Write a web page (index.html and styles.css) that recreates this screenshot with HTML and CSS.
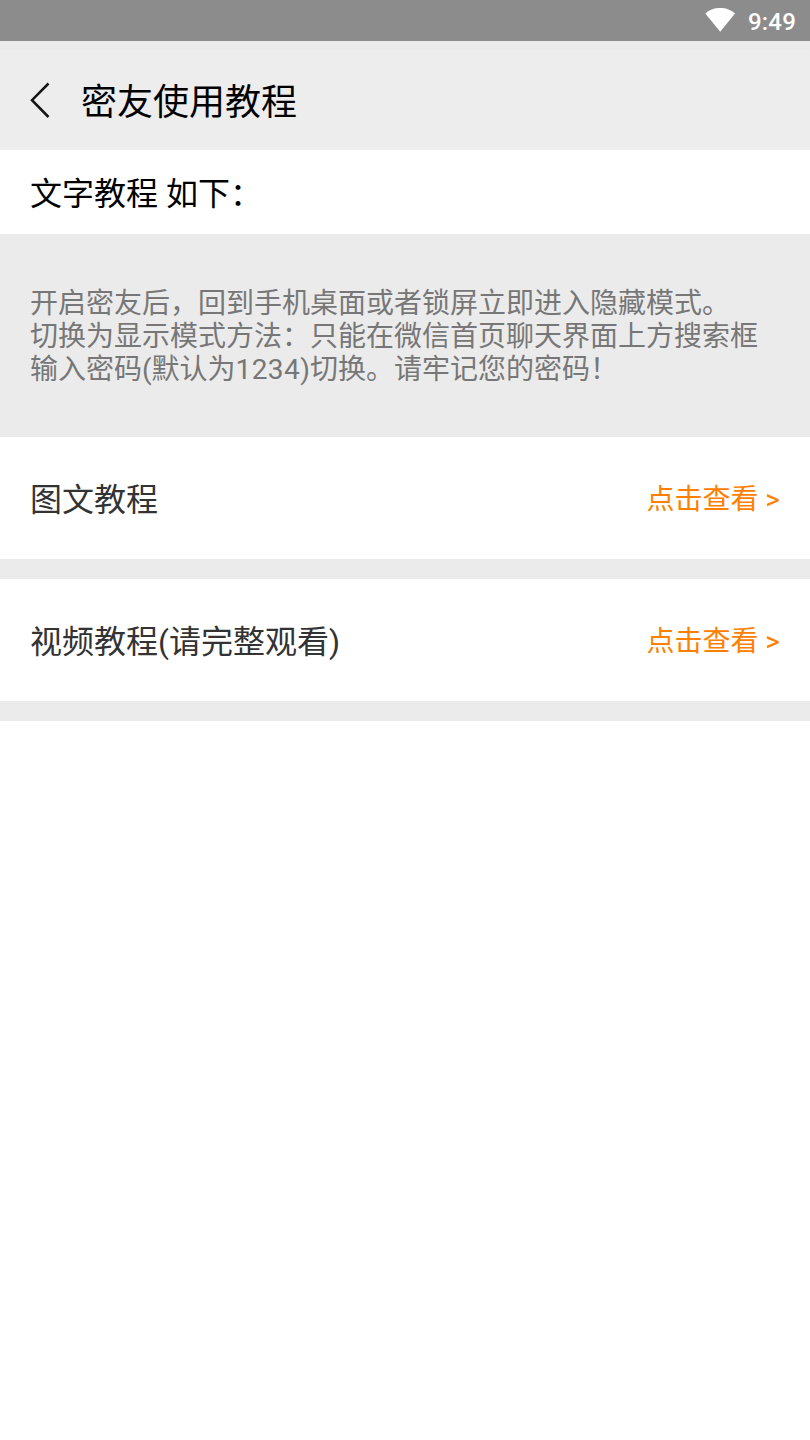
FILE: index.html
```html
<!DOCTYPE html>
<html lang="zh-CN">
<head>
<meta charset="utf-8">
<title>密友使用教程</title>
<link rel="stylesheet" href="styles.css">
</head>
<body>
<div class="status">
  <svg class="wifi" width="30" height="24" viewBox="0 0 30 24"><path d="M0.300 5.500A22.500 22.500 0 0 1 30 5.500L15.200 23.700Z" fill="#fff"/></svg>
  <span class="clock">9:49</span>
</div>
<header class="bar">
  <svg class="back" width="20" height="36" viewBox="0 0 20 36"><path d="M18.500 1.500L2 18.200L18.500 35" fill="none" stroke="#151515" stroke-width="2.500"/></svg>
  <h1 class="title">密友使用教程</h1>
</header>
<h2 class="section">文字教程 如下：</h2>
<p class="note">开启密友后，回到手机桌面或者锁屏立即进入隐藏模式。<br>切换为显示模式方法：只能在微信首页聊天界面上方搜索框<br>输入密码(默认为<span class="digits">1234</span>)切换。请牢记您的密码！</p>
<div class="row"><span class="label">图文教程</span><span class="link">点击查看 &gt;</span></div>
<div class="row"><span class="label">视频教程(请完整观看)</span><span class="link">点击查看 &gt;</span></div>
</body>
</html>
```
FILE: styles.css
```css
body {
  margin: 0;
  background: #fff;
  font-family: Roboto, "Noto Sans CJK SC", sans-serif;
}
.status {
  display: flex;
  align-items: center;
  justify-content: flex-end;
  gap: 13px;
  height: 41px;
  padding-right: 14px;
  background: #8c8c8c;
  color: #fff;
}
.wifi {
  margin-bottom: 2px;
}
.clock {
  font-size: 24px;
  font-weight: 500;
  line-height: 38px;
  padding-top: 2px;
  letter-spacing: 0.2px;
}
.bar {
  display: flex;
  align-items: center;
  gap: 31px;
  height: 109px;
  padding: 8px 30px 0;
  box-sizing: border-box;
  background: linear-gradient(#eaeaea 8px, #ededed 9px);
}
.title {
  margin: 0;
  padding-top: 7px;
  font-size: 36px;
  font-weight: 400;
  line-height: 42px;
}
.section {
  margin: 0;
  box-sizing: border-box;
  height: 84px;
  padding: 2px 30px 0;
  font-size: 32px;
  font-weight: 400;
  line-height: 85px;
}
.note {
  margin: 0;
  box-sizing: border-box;
  height: 203px;
  padding: 53px 30px 0;
  background: #ebebeb;
  color: #777;
  font-size: 28px;
  line-height: 33px;
  white-space: nowrap;
}
.digits {
  letter-spacing: 0.4px;
}
.row {
  display: flex;
  align-items: center;
  justify-content: space-between;
  box-sizing: border-box;
  height: 142px;
  padding: 0 30px 2px;
  border-bottom: 20px solid #ebebeb;
  color: #333;
  font-size: 32px;
}
.link {
  color: #ff8000;
  font-size: 28px;
}
```
